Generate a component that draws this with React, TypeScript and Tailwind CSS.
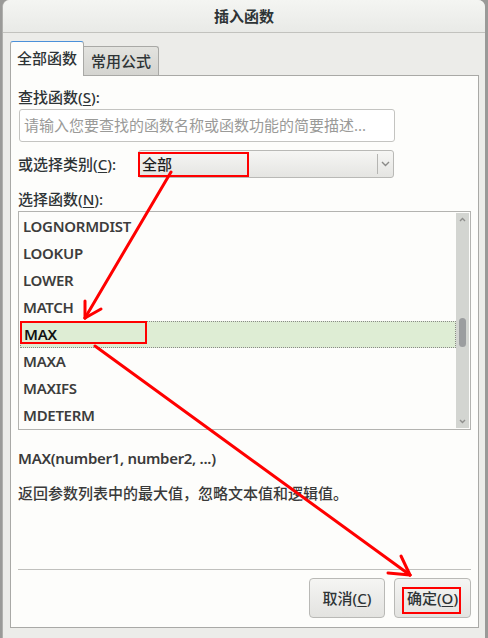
import React from "react";

const FONT = { fontFamily: '"Noto Sans", "Noto Sans CJK SC", sans-serif' };

function U({ c }: { c: string }) {
  return <span className="underline underline-offset-2 decoration-1">{c}</span>;
}

const items = ["LOGNORMDIST", "LOOKUP", "LOWER", "MATCH", "MAX", "MAXA", "MAXIFS", "MDETERM"];

export default function App() {
  return (
    <div className="relative w-[488px] h-[638px] overflow-hidden bg-[#9a9a98]" style={FONT}>
      <div className="ml-[2px] w-[483px] h-full bg-[#ecece9] rounded-t-[7px] flex flex-col border-l border-[#b0b0ad]">
        {/* title bar */}
        <div className="h-[33px] shrink-0 rounded-t-[7px] bg-gradient-to-b from-[#f4f5f2] to-[#e9eae7] border-b border-[#c2c2be] flex items-center justify-center">
          <span className="text-[15px] font-bold text-[#2e3436] leading-none">插入函数</span>
        </div>
        {/* tabs */}
        <div className="mt-[7px] ml-[7px] mr-[6px] flex items-end h-[35px]">
          <div className="w-[74px] h-[35px] bg-[#fdfdfb] border border-b-0 border-[#a9a9a6] border-t-[#4a90d9] rounded-t-[3px] flex items-center justify-center text-[15px] font-medium text-[#2e3436] relative z-10 -mb-px pb-[2px]">
            全部函数
          </div>
          <div className="w-[75px] h-[29px] bg-gradient-to-b from-[#e3e3df] to-[#d4d4d0] border border-b-0 border-l-0 border-[#a9a9a6] rounded-tr-[3px] flex items-center justify-center text-[15px] font-medium text-[#2e3436]">
            常用公式
          </div>
        </div>
        {/* panel */}
        <div className="ml-[7px] mr-[6px] h-[553px] bg-[#fdfdfb] border border-[#a9a9a6] flex flex-col pl-[7px] pr-[7px] text-[#2e3436] text-[15px] font-medium">
          <div className="mt-[11px] h-[20px] leading-[20px]">
            查找函数(<U c="S" />):
          </div>
          <div className="mt-[2px] ml-px w-[376px] h-[33px] bg-white border border-[#c4c4c1] rounded-[3px] flex items-center px-[4px] text-[#9a9a98] font-normal">
            请输入您要查找的函数名称或函数功能的简要描述...
          </div>
          <div className="mt-[8px] h-[28px] flex items-center">
            <div className="w-[120px] leading-[20px]">
              或选择类别(<U c="C" />):
            </div>
            <div className="w-[256px] h-[28px] rounded-[3px] border border-[#b9b9b6] bg-gradient-to-b from-[#f6f6f4] to-[#e5e5e2] flex items-center">
              <span className="flex-1 pl-[3px] text-[#1f1f1f]">全部</span>
              <div className="w-px h-[20px] bg-[#b5b5b2]" />
              <div className="w-[15px] flex items-center justify-center">
                <svg width="9" height="6" viewBox="0 0 9 6">
                  <path d="M1 1 L4.5 4.5 L8 1" stroke="#8a8a88" strokeWidth="1.4" fill="none" />
                </svg>
              </div>
            </div>
          </div>
          <div className="mt-[11px] h-[20px] leading-[20px]">
            选择函数(<U c="N" />):
          </div>
          <div className="mt-[2px] w-[453px] h-[219px] border border-[#b3b3b0] bg-[#fdfdfb] flex">
            <div className="flex-1 pt-px flex flex-col">
              {items.map((it) => (
                <div
                  key={it}
                  className={
                    it === "MAX"
                      ? "h-[27px] ml-px flex items-center pl-[3px] bg-[#deedd4] border border-dotted border-[#8a8a88] text-[#111] font-semibold"
                      : "h-[27px] flex items-center pl-[4px] text-[#3d3d3d] font-semibold"
                  }
                >
                  <span className="tracking-[-0.3px]">{it}</span>
                </div>
              ))}
            </div>
            <div className="w-[13px] mt-px mb-px mr-px bg-[#d3d5d1] flex flex-col items-center relative">
              <svg className="mt-[4px]" width="7" height="5" viewBox="0 0 7 5">
                <path d="M1 4 L3.5 1.5 L6 4" stroke="#8f8f8d" strokeWidth="1.4" fill="none" />
              </svg>
              <div className="absolute top-[105px] w-[7px] h-[29px] rounded-full bg-[#9b9d9f]" />
              <svg className="mt-auto mb-[4px]" width="7" height="5" viewBox="0 0 7 5">
                <path d="M1 1 L3.5 3.5 L6 1" stroke="#8f8f8d" strokeWidth="1.4" fill="none" />
              </svg>
            </div>
          </div>
          <div className="mt-[18px] h-[20px] leading-[20px] font-semibold text-[#3a3a3a] tracking-[-0.3px]">
            MAX(number1, number2, ...)
          </div>
          <div className="mt-[15px] h-[20px] leading-[20px] font-medium text-[#3a3a3a]">
            返回参数列表中的最大值，忽略文本值和逻辑值。
          </div>
          <div className="mt-[66px] h-px bg-[#c0c0bd]" />
          <div className="mt-[8px] flex justify-end gap-[9px]">
            <button className="w-[76px] h-[40px] rounded-[4px] border border-[#b9b9b6] bg-gradient-to-b from-[#f5f5f3] to-[#e3e3e0] text-[15px] text-[#2e3436]">
              取消(<U c="C" />)
            </button>
            <button className="w-[77px] h-[40px] rounded-[4px] border border-[#b9b9b6] bg-gradient-to-b from-[#f5f5f3] to-[#e3e3e0] text-[15px] text-[#2e3436]">
              确定(<U c="O" />)
            </button>
          </div>
        </div>
      </div>
      {/* annotations */}
      <svg className="absolute left-0 top-0 pointer-events-none" width="488" height="638" viewBox="0 0 488 638">
        <g stroke="#ff0000" fill="none" strokeWidth="2">
          <rect x="139" y="153" width="109" height="23" />
          <rect x="21" y="322" width="125" height="21" />
          <rect x="403" y="588" width="57" height="25" />
        </g>
        <g stroke="#ff0000" fill="none" strokeWidth="3" strokeLinecap="round">
          <line x1="171" y1="172" x2="85" y2="318" />
          <line x1="85" y1="318" x2="85" y2="301" />
          <line x1="85" y1="318" x2="101" y2="309" />
          <line x1="95" y1="346" x2="410" y2="575" />
          <line x1="410" y1="575" x2="388" y2="573" />
          <line x1="410" y1="575" x2="401" y2="556" />
        </g>
      </svg>
    </div>
  );
}
